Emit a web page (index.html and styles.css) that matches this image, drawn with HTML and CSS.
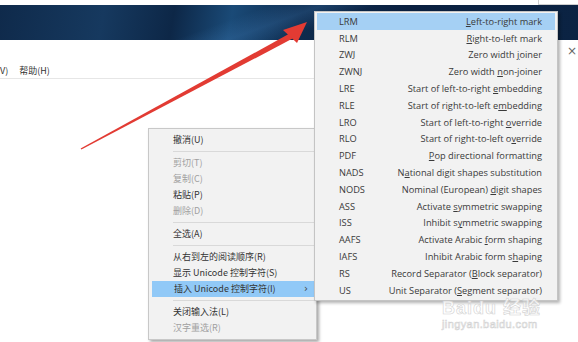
FILE: index.html
```html
<!DOCTYPE html>
<html lang="zh-CN">
<head>
    <meta charset="UTF-8">
    <meta name="viewport" content="width=device-width, initial-scale=1.0">
    <title>插入 Unicode 控制字符</title>
    <link rel="stylesheet" href="styles.css">
</head>
<body>
    <section class="Screen">
        <div class="Top-Strip"><div class="Corner-Box"></div></div>
        <div class="Banner"></div>
        <div class="Window">
            <div class="Menu-Bar">
                <span>V)</span>
                <span>帮助(H)</span>
            </div>
            <span class="Close">×</span>
        </div>

        <svg class="Arrow" width="578" height="342" viewBox="0 0 578 342">
            <polygon points="80.6,148.4 289.6,33.6 292.6,38.6 81.4,149.6" fill="#e23b33"/>
            <polygon points="307,22 283,30 297,43" fill="#e23b33"/>
        </svg>

        <div class="Context-Menu">
            <div class="Item">撤消(U)</div>
            <div class="Sep"></div>
            <div class="Item Disabled">剪切(T)</div>
            <div class="Item Disabled">复制(C)</div>
            <div class="Item">粘贴(P)</div>
            <div class="Item Disabled">删除(D)</div>
            <div class="Sep"></div>
            <div class="Item">全选(A)</div>
            <div class="Sep"></div>
            <div class="Item">从右到左的阅读顺序(R)</div>
            <div class="Item">显示 Unicode 控制字符(S)</div>
            <div class="Item Active">插入 Unicode 控制字符(I)<span class="Chevron">›</span></div>
            <div class="Sep"></div>
            <div class="Item">关闭输入法(L)</div>
            <div class="Item Disabled">汉字重选(R)</div>
        </div>

        <div class="Sub-Menu">
            <div class="Row Active"><span>LRM</span><span><u>L</u>eft-to-right mark</span></div>
            <div class="Row"><span>RLM</span><span><u>R</u>ight-to-left mark</span></div>
            <div class="Row"><span>ZWJ</span><span>Zero width <u>j</u>oiner</span></div>
            <div class="Row"><span>ZWNJ</span><span>Zero width <u>n</u>on-joiner</span></div>
            <div class="Row"><span>LRE</span><span>Start of left-to-right <u>e</u>mbedding</span></div>
            <div class="Row"><span>RLE</span><span>Start of right-to-left e<u>m</u>bedding</span></div>
            <div class="Row"><span>LRO</span><span>Start of left-to-right <u>o</u>verride</span></div>
            <div class="Row"><span>RLO</span><span>Start of right-to-left o<u>v</u>erride</span></div>
            <div class="Row"><span>PDF</span><span><u>P</u>op directional formatting</span></div>
            <div class="Row"><span>NADS</span><span>N<u>a</u>tional digit shapes substitution</span></div>
            <div class="Row"><span>NODS</span><span>Nominal (European) <u>d</u>igit shapes</span></div>
            <div class="Row"><span>ASS</span><span>Activate <u>s</u>ymmetric swapping</span></div>
            <div class="Row"><span>ISS</span><span>Inhibit s<u>y</u>mmetric swapping</span></div>
            <div class="Row"><span>AAFS</span><span>Activate Arabic <u>f</u>orm shaping</span></div>
            <div class="Row"><span>IAFS</span><span>Inhibit Arabic form s<u>h</u>aping</span></div>
            <div class="Row"><span>RS</span><span>Record Separator (<u>B</u>lock separator)</span></div>
            <div class="Row"><span>US</span><span>Unit Separator (<u>S</u>egment separator)</span></div>
        </div>

        <div class="Watermark">
            <div class="Logo">Bai<span class="Paw">du</span> 经验</div>
            <div class="Site">jingyan.baidu.com</div>
        </div>
    </section>
</body>
</html>
```

FILE: styles.css
```css
*{
    box-sizing: border-box;
    padding: 0;
    margin: 0;
}
body{
    width: 578px;
    height: 342px;
    overflow: hidden;
    background-color: #fff;
    font-family: "Noto Sans CJK SC", sans-serif;
}
section.Screen{
    position: relative;
    width: 578px;
    height: 342px;
    display: flex;
    flex-direction: column;
}
.Top-Strip{
    height: 5px;
    background-color: #fff;
    display: flex;
    justify-content: flex-end;
}
.Corner-Box{
    width: 40px;
    height: 5px;
    border-left: 1px solid #cfcfcf;
    border-bottom: 1px solid #cfcfcf;
}
.Banner{
    height: 35px;
    background:
        linear-gradient(160deg, rgba(255,255,255,0) 40%, rgba(70,130,190,0.25) 48%, rgba(255,255,255,0) 56%),
        linear-gradient(100deg, #0f2a4b 0%, #16395f 18%, #0d2747 30%, #1a4a77 40%, #0e2b4d 52%, #0a2040 70%, #0b2343 100%);
}
.Window{
    flex: 1;
    position: relative;
    background-color: #fff;
}
.Menu-Bar{
    margin-top: 25px;
    height: 14px;
    width: 314px;
    display: flex;
    gap: 11px;
    align-items: flex-end;
    font-size: 9px;
    color: #333;
    border-bottom: 1px solid #e6e6e6;
    padding-bottom: 1px;
}
.Close{
    position: absolute;
    right: 1px;
    top: 4px;
    font-family: "DejaVu Sans", sans-serif;
    font-size: 12px;
    color: #666;
}
.Arrow{
    position: absolute;
    left: 0;
    top: 0;
}

/* context menu */
.Context-Menu{
    position: absolute;
    left: 148px;
    top: 128px;
    width: 169px;
    padding: 3px 2px;
    background-color: #f2f2f2;
    border: 1px solid #c8c8c8;
    box-shadow: 2px 2px 3px rgba(0,0,0,0.35);
    font-size: 9px;
    color: #333;
}
.Context-Menu .Item{
    height: 16px;
    line-height: 16px;
    padding-left: 22px;
    display: flex;
    align-items: center;
    white-space: nowrap;
}
.Context-Menu .Item.Disabled{
    color: #a0a0a0;
}
.Context-Menu .Item.Active{
    background-color: #91c9f7;
    margin-left: 1px;
}
.Context-Menu .Chevron{
    margin-left: auto;
    margin-right: 6px;
    font-family: "DejaVu Sans", sans-serif;
    font-size: 10px;
    color: #444;
}
.Context-Menu .Sep{
    height: 1px;
    margin: 3px 0 3px 22px;
    background-color: #d9d9d9;
}

/* submenu */
.Sub-Menu{
    position: absolute;
    left: 314px;
    top: 11px;
    width: 244px;
    padding: 1px 2px;
    background-color: #f2f2f2;
    border: 1px solid #c4c4c4;
    box-shadow: 2px 2px 3px rgba(0,0,0,0.3);
    font-family: "Open Sans", sans-serif;
    font-size: 9.25px;
    color: #3a3a3a;
}
.Sub-Menu .Row{
    height: 16.8px;
    display: flex;
    align-items: center;
    justify-content: space-between;
    padding: 0 13px 0 22px;
    white-space: nowrap;
}
.Sub-Menu .Row.Active{
    background-color: #a5d0f4;
}
.Sub-Menu u{
    text-decoration-thickness: 1px;
    text-underline-offset: 1px;
}

/* watermark */
.Watermark{
    position: absolute;
    left: 442px;
    top: 301px;
    color: rgba(255,255,255,0.75);
    -webkit-text-stroke: 0.6px #d2d2d2;
    font-family: "Liberation Sans", "Noto Sans CJK SC", sans-serif;
}
.Watermark .Logo{
    font-size: 18px;
    font-weight: bold;
    line-height: 14px;
    letter-spacing: 1px;
}
.Watermark .Site{
    margin-top: 3px;
    font-size: 11px;
    line-height: 12px;
    letter-spacing: 0.4px;
}
```
